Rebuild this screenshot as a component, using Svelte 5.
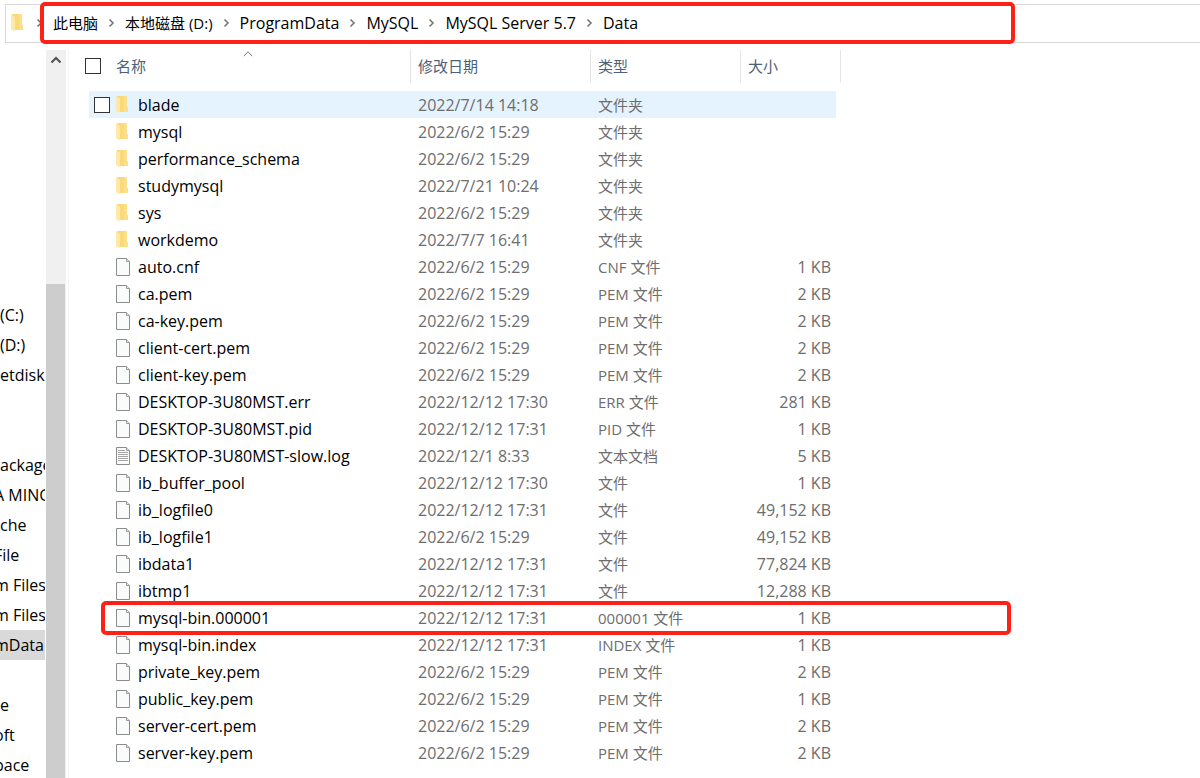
<script>
  const crumbs = ['此电脑', '本地磁盘 (D:)', 'ProgramData', 'MySQL', 'MySQL Server 5.7', 'Data'];

  const tree = [
    { text: '(C:)' },
    { text: '(D:)' },
    { text: 'etdiskDownload' },
    { text: '' },
    { text: '' },
    { text: 'ackages' },
    { text: 'A MINGW', cut: true },
    { text: 'che' },
    { text: 'File', cut: true },
    { text: 'm Files', cut: true },
    { text: 'm Files', cut: true },
    { text: 'mData', cut: true, current: true },
    { text: '' },
    { text: 'e' },
    { text: 'oft', cut: true },
    { text: 'pace', cut: true }
  ];

  const rows = [
    ['folder', 'blade', '2022/7/14 14:18', '文件夹', ''],
    ['folder', 'mysql', '2022/6/2 15:29', '文件夹', ''],
    ['folder', 'performance_schema', '2022/6/2 15:29', '文件夹', ''],
    ['folder', 'studymysql', '2022/7/21 10:24', '文件夹', ''],
    ['folder', 'sys', '2022/6/2 15:29', '文件夹', ''],
    ['folder', 'workdemo', '2022/7/7 16:41', '文件夹', ''],
    ['file', 'auto.cnf', '2022/6/2 15:29', 'CNF 文件', '1 KB'],
    ['file', 'ca.pem', '2022/6/2 15:29', 'PEM 文件', '2 KB'],
    ['file', 'ca-key.pem', '2022/6/2 15:29', 'PEM 文件', '2 KB'],
    ['file', 'client-cert.pem', '2022/6/2 15:29', 'PEM 文件', '2 KB'],
    ['file', 'client-key.pem', '2022/6/2 15:29', 'PEM 文件', '2 KB'],
    ['file', 'DESKTOP-3U80MST.err', '2022/12/12 17:30', 'ERR 文件', '281 KB'],
    ['file', 'DESKTOP-3U80MST.pid', '2022/12/12 17:31', 'PID 文件', '1 KB'],
    ['text', 'DESKTOP-3U80MST-slow.log', '2022/12/1 8:33', '文本文档', '5 KB'],
    ['file', 'ib_buffer_pool', '2022/12/12 17:30', '文件', '1 KB'],
    ['file', 'ib_logfile0', '2022/12/12 17:31', '文件', '49,152 KB'],
    ['file', 'ib_logfile1', '2022/6/2 15:29', '文件', '49,152 KB'],
    ['file', 'ibdata1', '2022/12/12 17:31', '文件', '77,824 KB'],
    ['file', 'ibtmp1', '2022/12/12 17:31', '文件', '12,288 KB'],
    ['file', 'mysql-bin.000001', '2022/12/12 17:31', '000001 文件', '1 KB'],
    ['file', 'mysql-bin.index', '2022/12/12 17:31', 'INDEX 文件', '1 KB'],
    ['file', 'private_key.pem', '2022/6/2 15:29', 'PEM 文件', '2 KB'],
    ['file', 'public_key.pem', '2022/6/2 15:29', 'PEM 文件', '1 KB'],
    ['file', 'server-cert.pem', '2022/6/2 15:29', 'PEM 文件', '2 KB'],
    ['file', 'server-key.pem', '2022/6/2 15:29', 'PEM 文件', '2 KB']
  ];

  const hovered = 'blade';
  const marked = 'mysql-bin.000001';
  const isLatin = (text) => /^[\x20-\x7e]+$/.test(text);
</script>

{#snippet folder()}
  <svg class="icon" width="14" height="18" viewBox="0 0 14 18" aria-hidden="true">
    <path d="M1 0h10v11h1v5H3z" fill="#f9d978" />
    <path d="M8 0h3v11h1v5H8z" fill="#fcdf8a" />
    <path d="M0 .500L4 3v11.500L3 17.500 0 15z" fill="#ffe9a8" />
  </svg>
{/snippet}

{#snippet chevron()}
  <svg class="chevron" width="7" height="10" viewBox="0 0 7 10" aria-hidden="true">
    <path d="M1.500 1.500L5 5 1.500 8.500" fill="none" stroke="#777" stroke-width="1.600" />
  </svg>
{/snippet}

<div class="explorer">
  <nav class="address" aria-label="地址">
    {@render folder()}
    <span class="first">{@render chevron()}</span>
    <ol>
      {#each crumbs as crumb, i}
        <li>
          {#if i > 0}{@render chevron()}{/if}
          <a href="#top" class:latin={isLatin(crumb)}>{crumb}</a>
        </li>
      {/each}
    </ol>
    <span class="frame frame-path"></span>
  </nav>

  <div class="body">
    <nav class="tree" aria-label="文件夹">
      {#each tree as item}
        <div class="node" class:current={item.current} class:cut={item.cut}><span>{item.text}</span></div>
      {/each}
    </nav>

    <div class="scrollbar">
      <button type="button" aria-label="向上滚动">
        <svg width="12" height="8" viewBox="0 0 12 8" aria-hidden="true">
          <path d="M1.500 6.500L6 2l4.500 4.500" fill="none" stroke="#505050" stroke-width="2" />
        </svg>
      </button>
      <div class="thumb"></div>
    </div>

    <main>
      <table>
        <colgroup><col class="c-name" /><col class="c-date" /><col class="c-type" /><col class="c-size" /></colgroup>
        <thead>
          <tr>
            <th>
              <div class="head-name">
                <input type="checkbox" aria-label="全选" />
                <span>名称</span>
                <svg class="sort" width="10" height="6" viewBox="0 0 10 6" aria-hidden="true">
                  <path d="M.5 5.300L5 .8l4.500 4.500" fill="none" stroke="#777" />
                </svg>
              </div>
            </th>
            <th>修改日期</th>
            <th>类型</th>
            <th>大小</th>
          </tr>
        </thead>
        <tbody>
          {#each rows as [kind, name, date, type, size]}
            <tr class:hovered={name === hovered}>
              <td>
                <div class="cell name latin">
                  <span class="pick">
                    {#if name === hovered}<input type="checkbox" aria-label={name} />{/if}
                  </span>
                  {#if kind === 'folder'}
                    {@render folder()}
                  {:else}
                    <svg class="icon" width="14" height="18" viewBox="0 0 14 18" aria-hidden="true">
                      <path d="M.5.500h10l3 3v14H.5z" fill="#fafbfb" stroke="#8c8c8c" />
                      <path d="M10.500.500v3h3" fill="#e4e4e4" stroke="#9a9a9a" />
                      {#if kind === 'text'}
                        <path d="M2 3.500h7M2 5.500h10M2 7.500h10M2 9.500h10M2 11.500h10M2 13.500h10" stroke="#a4a4a4" />
                      {/if}
                    </svg>
                  {/if}
                  <span>{name}</span>
                  {#if name === marked}<span class="frame frame-row"></span>{/if}
                </div>
              </td>
              <td><div class="cell latin">{date}</div></td>
              <td><div class="cell">{type}</div></td>
              <td><div class="cell size latin">{size}</div></td>
            </tr>
          {/each}
        </tbody>
      </table>
    </main>
  </div>
</div>

<style>
  :global(body) {
    margin: 0;
    background: #fff;
  }
  .explorer {
    display: flex;
    flex-direction: column;
    height: 100vh;
    overflow: hidden;
    font: 15px/20px "Open Sans", "Noto Sans CJK SC", sans-serif;
    color: #000;
  }
  .latin {
    font-size: 16px;
  }
  .address {
    position: relative;
    display: flex;
    align-items: center;
    flex: none;
    box-sizing: border-box;
    height: 39px;
    margin: 4px 0 7px 5px;
    padding: 0 0 2px 5px;
    border: 1px solid #d9d9d9;
    border-right: 0;
  }
  .address ol {
    display: flex;
    margin: 0;
    padding: 0 0 0 10px;
    list-style: none;
  }
  .address li {
    display: flex;
    align-items: center;
    white-space: nowrap;
  }
  .address a {
    color: #000;
    text-decoration: none;
  }
  .first {
    display: flex;
    width: 7px;
    margin-left: 11px;
  }
  li .chevron {
    margin: 0 10px;
  }
  .frame {
    position: absolute;
    box-sizing: border-box;
    border: 4px solid #ff2116;
    border-radius: 5px;
    pointer-events: none;
  }
  .frame-path {
    left: 34px;
    top: -3px;
    width: 975px;
    height: 42px;
  }
  .frame-row {
    left: 12px;
    top: -3px;
    width: 910px;
    height: 34px;
  }
  .body {
    display: flex;
    flex: 1;
    min-height: 0;
  }
  .tree {
    flex: none;
    width: 45px;
    padding-top: 250px;
    margin-right: 1px;
    overflow: hidden;
    font-size: 16px;
  }
  .node {
    height: 30px;
    line-height: 30px;
    white-space: nowrap;
    overflow: hidden;
  }
  .cut span {
    margin-left: -6px;
  }
  .current {
    background: #d9d9d9;
  }
  .scrollbar {
    display: flex;
    flex-direction: column;
    flex: none;
    width: 20px;
    margin-right: 2px;
    background: #f0f0f0;
  }
  .scrollbar button {
    display: flex;
    justify-content: center;
    align-items: center;
    flex: none;
    height: 20px;
    padding: 0 1px 0 0;
    border: 0;
    background: none;
  }
  .thumb {
    flex: 1;
    margin: 214px 1px 0 0;
    background: #cdcdcd;
  }
  main {
    flex: 1;
    min-width: 0;
    padding-left: 15px;
    border-left: 1px solid #f5f5f5;
  }
  table {
    width: 757px;
    table-layout: fixed;
    border-spacing: 0;
  }
  .c-name {
    width: 327px;
  }
  .c-date {
    width: 180px;
  }
  .c-type {
    width: 150px;
  }
  .c-size {
    width: 100px;
  }
  th {
    height: 31px;
    padding: 0 0 2px 7px;
    border-right: 1px solid #e5e5e5;
    font-weight: 400;
    text-align: left;
    color: #4c607a;
  }
  th:first-child {
    padding-left: 1px;
  }
  thead::after {
    content: "";
    display: block;
    height: 8px;
  }
  td {
    padding: 0;
  }
  .head-name {
    position: relative;
    display: flex;
    align-items: center;
    gap: 15px;
  }
  .sort {
    position: absolute;
    left: 158px;
    top: -5px;
  }
  input {
    appearance: none;
    box-sizing: border-box;
    width: 16px;
    height: 16px;
    margin: 0;
    border: 1px solid #333;
    background: #fff;
  }
  .cell {
    display: flex;
    align-items: center;
    height: 27px;
    padding-left: 7px;
    color: #6d6d6d;
    white-space: nowrap;
  }
  .name {
    position: relative;
    margin-left: 5px;
    padding-left: 5px;
    color: #000;
  }
  .pick {
    display: flex;
    width: 16px;
    margin-right: 6px;
  }
  .name .icon {
    margin-right: 8px;
  }
  .size {
    justify-content: flex-end;
    margin-right: 5px;
    padding-right: 5px;
  }
  .hovered .cell {
    background: #e5f3ff;
  }
</style>
